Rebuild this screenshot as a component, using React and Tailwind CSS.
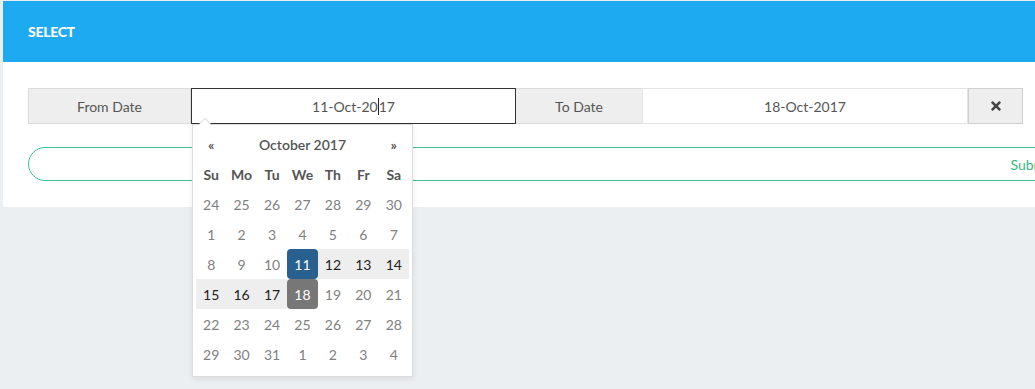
import { FaTimes } from 'react-icons/fa'

const weeks = [
  [24, 25, 26, 27, 28, 29, 30],
  [1, 2, 3, 4, 5, 6, 7],
  [8, 9, 10, 11, 12, 13, 14],
  [15, 16, 17, 18, 19, 20, 21],
  [22, 23, 24, 25, 26, 27, 28],
  [29, 30, 31, 1, 2, 3, 4],
]

function dayClass(w, d) {
  if (w === 2 && d === 11) return 'bg-[#286090] text-white rounded-[4px]'
  if (w === 3 && d === 18) return 'bg-[#777777] text-white rounded-[4px]'
  if ((w === 2 && d > 11) || (w === 3 && d < 18)) return 'bg-[#eeeeee] text-[#222]'
  return 'text-[#808080]'
}

function DatePicker() {
  return (
    <div className="absolute left-0 top-[calc(100%+1px)] z-10 w-[221px] bg-white border border-[#dcdcdc] shadow-[0_2px_6px_rgba(0,0,0,0.08)] pt-[4px] pb-[7px] px-[3px]">
      {/* caret */}
      <div className="absolute left-[5px] -top-[7px] w-0 h-0 border-l-[7px] border-r-[7px] border-b-[7px] border-l-transparent border-r-transparent border-b-[#d0d0d0]" />
      <div className="absolute left-[6px] -top-[6px] w-0 h-0 border-l-[6px] border-r-[6px] border-b-[6px] border-l-transparent border-r-transparent border-b-white" />

      <div className="grid grid-cols-7 w-[213px] text-[14px]">
        <div className="h-[30px] flex items-center justify-center text-[#555] font-bold">«</div>
        <div className="col-span-5 h-[30px] flex items-center justify-center text-[#555] font-semibold">October 2017</div>
        <div className="h-[30px] flex items-center justify-center text-[#555] font-bold">»</div>

        {['Su', 'Mo', 'Tu', 'We', 'Th', 'Fr', 'Sa'].map((n) => (
          <div key={n} className="h-[30px] flex items-center justify-center text-[#555] font-bold">
            {n}
          </div>
        ))}

        {weeks.map((week, w) =>
          week.map((d, i) => (
            <div key={`${w}-${i}`} className={`h-[30px] flex items-center justify-center ${dayClass(w, d)}`}>
              {d}
            </div>
          ))
        )}
      </div>
    </div>
  )
}

export default function App() {
  return (
    <div className="w-[1035px] h-[389px] overflow-hidden bg-[#eceff1] font-['Lato','Open_Sans',sans-serif]">
      <div className="ml-[3px] mt-px w-[1060px] bg-white">
        {/* Header */}
        <div className="h-[61px] bg-[#1eaaf0] flex items-center px-[25px]">
          <span className="text-white font-black text-[14px] tracking-[-0.3px]">SELECT</span>
        </div>

        {/* Body */}
        <div className="px-[25px] pt-[26px] pb-[26px]">
          <div className="flex h-[36px] w-[995px] text-[14px] text-[#555]">
            <div className="w-[163px] bg-[#eeeeee] border border-[#dcdcdc] flex items-center justify-center">
              From Date
            </div>
            <div className="relative w-[325px] border border-[#333] bg-white flex items-center justify-center">
              <span className="flex items-center">
                11-Oct-20
                <span className="inline-block w-px h-[17px] bg-[#222]" />
                17
              </span>
              <DatePicker />
            </div>
            <div className="w-[126px] bg-[#eeeeee] border-y border-[#dcdcdc] flex items-center justify-center">
              To Date
            </div>
            <div className="w-[326px] border border-[#e4e4e4] bg-white flex items-center justify-center">
              18-Oct-2017
            </div>
            <div className="w-[55px] bg-[#eeeeee] border border-[#d0d0d0] flex items-center justify-center text-[#444]">
              <FaTimes className="w-[14px] h-[14px]" />
            </div>
          </div>

          <div className="mt-[23px]">
            <div className="w-[2008px] h-[34px] rounded-full border border-[#3dbf92] flex items-center justify-center text-[14px] text-[#35b583]">
              Submit
            </div>
          </div>
        </div>
      </div>
    </div>
  )
}
